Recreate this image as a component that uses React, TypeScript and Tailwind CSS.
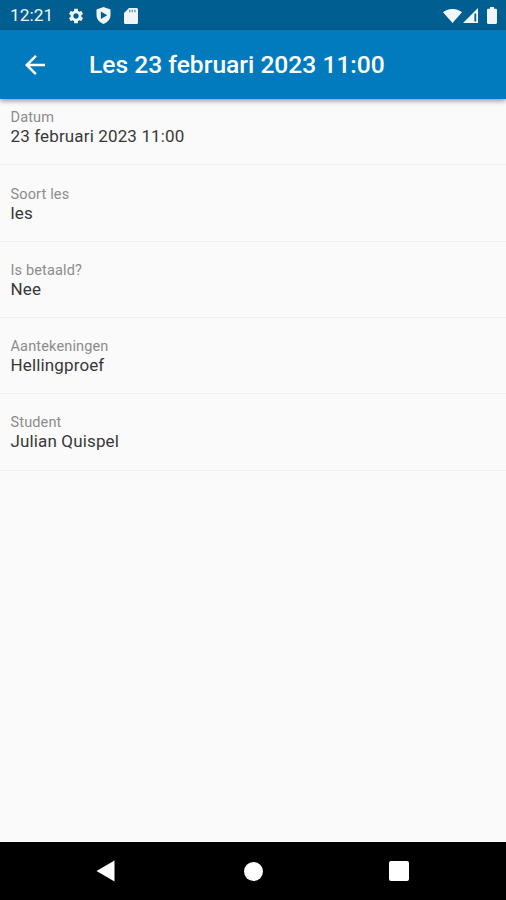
interface Field {
  label: string;
  value: string;
  rowClass: string;
}

const FIELDS: Field[] = [
  { label: "Datum", value: "23 februari 2023 11:00", rowClass: "h-[66px] pt-[10px]" },
  { label: "Soort les", value: "les", rowClass: "h-[77px] pt-[21px]" },
  { label: "Is betaald?", value: "Nee", rowClass: "h-[76px] pt-[20px]" },
  { label: "Aantekeningen", value: "Hellingproef", rowClass: "h-[76px] pt-[20px]" },
  { label: "Student", value: "Julian Quispel", rowClass: "h-[77px] pt-[20px]" },
];

function StatusBar() {
  return (
    <div className="flex h-[30px] shrink-0 items-center bg-[#015e91] pl-[10px] pr-[9px] text-[#f1f6fa]">
      <span className="w-[44px] pt-[2px] text-[17.4px] leading-none whitespace-nowrap">12:21</span>
      <svg className="ml-[13px] mt-[1px] h-[18px] w-[18px]" viewBox="0 0 24 24" fill="currentColor">
        <path d="M19.14 12.94c.04-.3.06-.61.06-.94 0-.32-.02-.64-.07-.94l2.03-1.58c.18-.14.23-.41.12-.61l-1.92-3.32c-.12-.22-.37-.29-.59-.22l-2.39.96c-.5-.38-1.03-.7-1.62-.94l-.36-2.54c-.04-.24-.24-.41-.48-.41h-3.84c-.24 0-.43.17-.47.41l-.36 2.54c-.59.24-1.13.57-1.62.94l-2.39-.96c-.22-.08-.47 0-.59.22L2.74 8.87c-.12.21-.08.47.12.61l2.03 1.58c-.05.3-.09.63-.09.94s.02.64.07.94l-2.03 1.58c-.18.14-.23.41-.12.61l1.92 3.32c.12.22.37.29.59.22l2.39-.96c.5.38 1.03.7 1.62.94l.36 2.54c.05.24.24.41.48.41h3.84c.24 0 .44-.17.47-.41l.36-2.54c.59-.24 1.13-.56 1.62-.94l2.39.96c.22.08.47 0 .59-.22l1.92-3.32c.12-.22.07-.47-.12-.61l-2.01-1.58zM12 15.6c-1.98 0-3.6-1.62-3.6-3.6s1.62-3.6 3.6-3.6 3.6 1.62 3.6 3.6-1.62 3.6-3.6 3.6z" />
      </svg>
      <svg className="ml-[11px] h-[17px] w-[15px]" viewBox="0 0 15 17">
        <path d="M7.5 0 14.5 2.4V8C14.5 12.1 11.6 15.5 7.5 17 3.4 15.5.5 12.1.5 8V2.4Z" fill="currentColor" />
        <path d="M4.9 4.6 11.2 8.3 4.9 12Z" fill="#015e91" />
      </svg>
      <svg className="ml-[13px] mt-[1px] h-[16px] w-[14px]" viewBox="0 0 14 16">
        <path d="M5 0h7.3C13.2 0 14 .7 14 1.6v12.8c0 .9-.8 1.6-1.7 1.6H1.7C.8 16 0 15.3 0 14.4V5Z" fill="currentColor" />
        <path d="M5 1.8h1.4v2.4H5zM7.6 1.8H9v2.4H7.6zM10.2 1.8h1.4v2.4h-1.4z" fill="#5b98bb" />
      </svg>
      <svg className="ml-auto mt-[1px] h-[14px] w-[19px]" viewBox="0 0 20 14" preserveAspectRatio="none" fill="currentColor">
        <path d="M0 3.2C5.7-1.1 14.3-1.1 20 3.2L10 14Z" />
      </svg>
      <svg className="ml-[1px] mt-[1px] h-[15px] w-[15px]" viewBox="0 0 15 15">
        <path d="M15 0v15H0Z" fill="currentColor" />
        <path d="M11.4 5.5h1.8v8h-1.8z" fill="#015e91" />
      </svg>
      <svg className="ml-[9px] h-[17px] w-[10px]" viewBox="0 0 10 17" fill="currentColor">
        <path d="M3 0h4v1.7h1.8c.7 0 1.2.5 1.2 1.2v12.9c0 .7-.5 1.2-1.2 1.2H1.2C.5 17 0 16.5 0 15.8V2.9c0-.7.5-1.2 1.2-1.2H3Z" />
      </svg>
    </div>
  );
}

function AppBar() {
  return (
    <header className="relative flex h-[69px] shrink-0 items-center bg-[#027bbe] pl-[20px] text-white shadow-[0_2px_5px_rgba(0,0,0,0.4)]">
      <button type="button" aria-label="Terug" className="h-[30px] w-[30px]">
        <svg className="h-full w-full" viewBox="0 0 24 24" fill="currentColor">
          <path d="M20 11H7.83l5.59-5.59L12 4l-8 8 8 8 1.41-1.41L7.83 13H20v-2z" />
        </svg>
      </button>
      <h1 className="ml-[39px] pt-[2px] text-[24.6px] leading-none font-medium whitespace-nowrap">
        Les 23 februari 2023 11:00
      </h1>
    </header>
  );
}

function NavigationBar() {
  return (
    <nav className="flex h-[58px] shrink-0 items-center bg-black pl-[96px] text-white">
      <svg className="h-[22px] w-[19px]" viewBox="0 0 19 22" fill="currentColor">
        <path d="M.5 11 18.5.5v21Z" />
      </svg>
      <div className="ml-[129px] h-[19px] w-[19px] rounded-full bg-white" />
      <div className="ml-[126px] h-[20px] w-[20px] rounded-[2px] bg-white" />
    </nav>
  );
}

export default function App() {
  return (
    <div className="flex h-[900px] w-[506px] flex-col overflow-hidden bg-[#fafafa] font-['Roboto',sans-serif]">
      <StatusBar />
      <AppBar />
      <main className="flex-1">
        {FIELDS.map((field) => (
          <div key={field.label} className={`border-b border-[#eeeeee] pl-[10.5px] ${field.rowClass}`}>
            <div className="text-[14.5px] leading-[17px] tracking-[0.15px] text-[#8c8c8c]">{field.label}</div>
            <div className="text-[17px] leading-[20px] tracking-[0.14px] text-[#383838]">{field.value}</div>
          </div>
        ))}
      </main>
      <NavigationBar />
    </div>
  );
}
